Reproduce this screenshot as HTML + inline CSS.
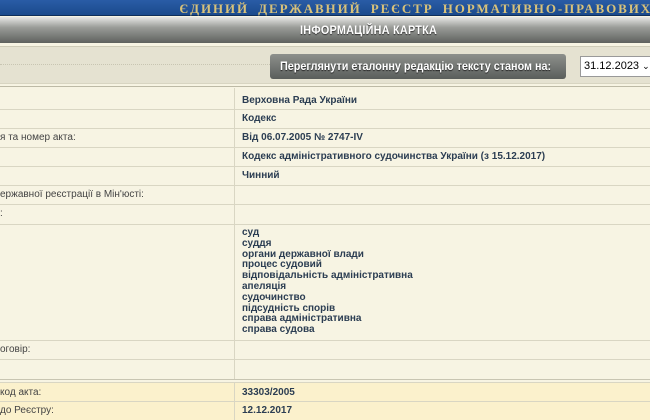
<!DOCTYPE html>
<html><head><meta charset="utf-8"><style>
*{margin:0;padding:0;box-sizing:border-box}
body{width:650px;height:420px;overflow:hidden;background:#f7f4e3;font-family:"Liberation Sans",sans-serif;position:relative}
.a{position:absolute}
.top{left:0;top:0;width:650px;height:16px;background:linear-gradient(#2a5ca6,#1b4a8c);border-bottom:1px solid #0f2e5a}
.top span{position:absolute;right:-2px;top:1px;font-family:"Liberation Serif",serif;font-weight:bold;font-size:13px;letter-spacing:1.9px;word-spacing:4px;color:#d8c27a;white-space:nowrap}
.bar{left:0;top:17px;width:650px;height:26px;background:linear-gradient(#e8e8e6,#9a9c98 40%,#5e615e)}
.bar span{position:absolute;left:300px;top:6px;color:#fff;font-weight:bold;font-size:12px;letter-spacing:.3px;text-shadow:0 1px 1px #333;white-space:nowrap;transform:scaleX(.9);transform-origin:left}
.tb{left:0;top:46px;width:650px;height:38px;background:#e5e2d1;border-top:1px solid #cfccb8;border-bottom:1px solid #d8d5c2}
.dots{left:0;top:64px;width:270px;border-top:1px dotted #c8c5b2}
.btn{left:270px;top:54px;width:296px;height:25px;background:linear-gradient(#8d908c,#5a5e5b);border-radius:3px;color:#fff;font-size:12px;font-weight:bold;line-height:25px;text-shadow:0 1px 1px #222;white-space:nowrap;overflow:hidden}
.btn span{display:inline-block;margin-left:10px;transform:scaleX(.9);transform-origin:left}
.sel{left:580px;top:56px;width:72px;height:21px;background:#fff;border:1px solid #999;font-size:11px;line-height:19px;padding-left:3px;color:#000;white-space:nowrap;overflow:hidden}
.hl{left:0;width:650px;border-top:1px solid #d9d6c3}
.vl{left:234px;width:1px;background:#d9d6c3}
.l{left:0;font-size:10px;color:#444;white-space:nowrap}
.r{left:242px;font-size:10px;font-weight:bold;color:#2b3d52;white-space:nowrap}
.list{left:242px;top:228px;font-size:10px;font-weight:bold;color:#2b3d52;line-height:10.8px}
</style></head><body>
<div class="a top"><span>ЄДИНИЙ ДЕРЖАВНИЙ РЕЄСТР НОРМАТИВНО-ПРАВОВИХ</span></div>
<div class="a bar"><span>ІНФОРМАЦІЙНА КАРТКА</span></div>
<div class="a tb"></div>
<div class="a dots"></div>
<div class="a btn"><span>Переглянути еталонну редакцію тексту станом на:</span></div>
<div class="a sel">31.12.2023 <span style="font-size:9px">&#8964;</span></div>
<div class="a hl" style="top:86px;border-color:#bdbaa6"></div>
<div class="a vl" style="top:88px;height:291px"></div>
<div class="a hl" style="top:109px"></div>
<div class="a hl" style="top:128px"></div>
<div class="a hl" style="top:147px"></div>
<div class="a hl" style="top:166px"></div>
<div class="a hl" style="top:185px"></div>
<div class="a hl" style="top:204px"></div>
<div class="a hl" style="top:224px"></div>
<div class="a hl" style="top:340px"></div>
<div class="a hl" style="top:359px"></div>
<div class="a hl" style="top:379px;border-color:#c8c5b2"></div>
<div class="a" style="left:0;top:382px;width:650px;height:38px;background:#fbf1cc;border-top:1px solid #d9d6c3"></div>
<div class="a vl" style="top:383px;height:37px"></div>
<div class="a hl" style="top:401px"></div>
<div class="a r" style="top:95px">Верховна Рада України</div>
<div class="a r" style="top:113px">Кодекс</div>
<div class="a l" style="top:132px">я та номер акта:</div>
<div class="a r" style="top:132px">Від 06.07.2005 № 2747-IV</div>
<div class="a r" style="top:151px">Кодекс адміністративного судочинства України (з 15.12.2017)</div>
<div class="a r" style="top:170px">Чинний</div>
<div class="a l" style="top:189px">ержавної реєстрації в Мін'юсті:</div>
<div class="a l" style="top:208px">:</div>
<div class="a list">суд<br>суддя<br>органи державної влади<br>процес судовий<br>відповідальність адміністративна<br>апеляція<br>судочинство<br>підсудність спорів<br>справа адміністративна<br>справа судова</div>
<div class="a l" style="top:344px">оговір:</div>
<div class="a l" style="top:387px">код акта:</div>
<div class="a r" style="top:387px">33303/2005</div>
<div class="a l" style="top:405px">до Реєстру:</div>
<div class="a r" style="top:405px">12.12.2017</div>
</body></html>
